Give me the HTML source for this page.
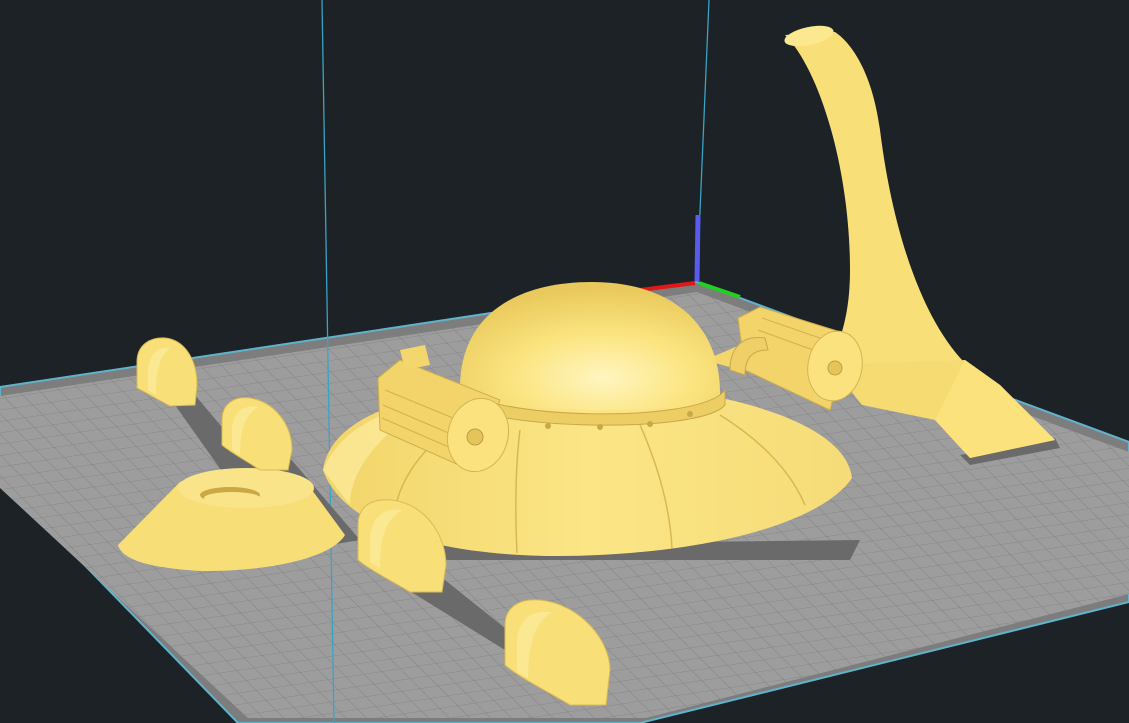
<!DOCTYPE html>
<html><head><meta charset="utf-8"><style>
html,body{margin:0;padding:0;background:#1c2226;}
svg{display:block}
</style></head><body>
<svg width="1129" height="723" viewBox="0 0 1129 723" xmlns="http://www.w3.org/2000/svg">
<defs>
<pattern id="g" width="18" height="18" patternUnits="userSpaceOnUse" patternTransform="matrix(1,-0.15,0.55,0.55,0,0)">
<rect width="18" height="18" fill="#9d9d9d"/>
<path d="M0 0H18M0 0V18" stroke="#828282" stroke-width="1.2" fill="none"/>
</pattern>
<radialGradient id="dome" cx="0.55" cy="0.75" r="0.7"><stop offset="0" stop-color="#fff6c0"/><stop offset="0.5" stop-color="#fbe47f"/><stop offset="1" stop-color="#e9c95c"/></radialGradient>
<linearGradient id="lo" x1="0" y1="0" x2="1" y2="0"><stop offset="0" stop-color="#f2d56a"/><stop offset="0.5" stop-color="#fbe585"/><stop offset="1" stop-color="#f6dc78"/></linearGradient>
</defs>
<rect width="1129" height="723" fill="#1c2226"/>
<polygon points="0,387 697,282 1129,442 1129,602 640,723 238,723 0,478" fill="#7d7d7d" stroke="#5fb3cc" stroke-width="2"/>
<polygon points="0,396 697,292 1129,452 1129,594 646,718 248,718 0,488" fill="url(#g)"/>
<line x1="322" y1="0" x2="334" y2="723" stroke="#3aa3c4" stroke-width="1.3"/>
<line x1="709" y1="0" x2="697" y2="282" stroke="#3aa3c4" stroke-width="1.3"/>
<line x1="698" y1="215" x2="697" y2="281" stroke="#5a5aee" stroke-width="5"/>
<line x1="640" y1="290" x2="695" y2="283" stroke="#e01818" stroke-width="4"/>
<line x1="699" y1="283" x2="740" y2="297" stroke="#22d022" stroke-width="4"/>
<g fill="#6a6a6a">
<polygon points="170,398 195,395 300,520 260,525"/>
<polygon points="255,462 290,458 360,540 330,545"/>
<polygon points="400,585 445,580 520,640 505,650"/>
<polygon points="430,545 860,540 850,560 440,560"/>
<polygon points="960,455 1055,438 1060,448 970,465"/>
</g>
<path d="M785,35 C820,70 850,170 850,270 C850,320 838,345 828,368 L968,366 C930,330 895,250 880,130 C872,70 850,42 835,32 Z" fill="#f8df78"/>
<ellipse cx="809" cy="36" rx="25" ry="9" transform="rotate(-12 809 36)" fill="#fbe88f"/>
<polygon points="830,365 965,360 1000,385 1055,440 970,458 935,420 862,405" fill="#f6da72"/>
<polygon points="935,420 965,360 1000,385 1055,440 970,458" fill="#fbe27c"/>
<path d="M705,360 L740,345 L760,350 L740,370Z" fill="#f3d66c"/>
<path d="M323,470 C330,420 400,388 560,380 C720,385 845,420 852,478 C820,525 700,555 560,556 C420,556 340,520 323,470Z" fill="url(#lo)"/>
<path d="M323,470 C340,430 380,410 440,398 C380,430 350,470 350,505Z" fill="#fff0a8" opacity="0.6"/>
<g stroke="#d8b850" stroke-width="1.5" fill="none">
<path d="M520,430 C515,470 515,510 517,553"/>
<path d="M640,425 C660,470 670,510 672,548"/>
<path d="M460,420 C420,450 400,480 395,510"/>
<path d="M720,415 C760,440 790,470 805,505"/>
</g>
<path d="M460,392 C458,320 510,282 592,282 C672,282 722,325 720,398 C690,415 500,415 460,392Z" fill="url(#dome)"/>
<path d="M455,385 C480,420 700,425 725,390 L725,405 C700,435 480,430 455,400Z" fill="#ecce64" stroke="#c9a84a" stroke-width="1"/>
<g fill="#c9a84a"><circle cx="548" cy="426" r="3"/><circle cx="600" cy="427" r="3"/><circle cx="650" cy="424" r="3"/><circle cx="690" cy="414" r="3"/></g>
<path d="M378,378 L400,360 L500,400 L470,470 L380,430Z" fill="#f2d46a" stroke="#cfae4c" stroke-width="1"/>
<g stroke="#d2b150" stroke-width="1"><line x1="385" y1="390" x2="470" y2="425"/><line x1="383" y1="405" x2="465" y2="440"/><line x1="382" y1="418" x2="460" y2="452"/></g>
<ellipse cx="478" cy="435" rx="30" ry="37" transform="rotate(15 478 435)" fill="#fbe27e" stroke="#d4b352"/>
<circle cx="475" cy="437" r="8" fill="#e5c45a" stroke="#bf9e44"/>
<path d="M400,350 L425,345 L430,365 L405,370Z" fill="#f3d66c"/>
<path d="M738,318 L760,307 L850,335 L830,410 L745,370Z" fill="#f2d46a" stroke="#cfae4c" stroke-width="1"/>
<g stroke="#d2b150" stroke-width="1"><line x1="762" y1="318" x2="840" y2="345"/><line x1="758" y1="330" x2="835" y2="358"/></g>
<ellipse cx="835" cy="366" rx="27" ry="35" transform="rotate(10 835 366)" fill="#fbe27e" stroke="#d4b352"/>
<circle cx="835" cy="368" r="7" fill="#e5c45a" stroke="#bf9e44"/>
<path d="M730,370 C730,345 745,335 765,338 L768,350 C752,350 745,358 745,375Z" fill="#efd068" stroke="#c9a84a"/>
<path d="M118,545 L180,482 C220,466 290,470 312,490 L345,535 C330,560 260,572 200,571 C150,568 122,560 118,545Z" fill="#f8de77"/>
<ellipse cx="246" cy="488" rx="68" ry="20" fill="#fae48a"/>
<ellipse cx="230" cy="495" rx="30" ry="8" fill="#caa846"/>
<ellipse cx="232" cy="498" rx="28" ry="6" fill="#fae48a"/>
<g fill="#f8df78" stroke="#d9b954" stroke-width="1">
<path d="M137,388 L137,362 C137,345 150,337 165,338 C185,340 197,360 197,385 L195,405 L170,406 C155,398 145,392 137,388Z"/>
<path d="M222,445 L222,420 C222,404 234,396 250,398 C275,402 292,425 292,450 L288,470 L260,470 C245,460 230,452 222,445Z"/>
<path d="M358,560 L358,525 C358,506 372,498 392,500 C425,504 446,535 446,565 L442,592 L410,592 C390,580 370,570 358,560Z"/>
<path d="M505,665 L505,625 C505,607 520,598 540,600 C580,604 610,640 610,670 L606,705 L570,705 C545,690 520,678 505,665Z"/>
</g>
<g fill="#fbe893">
<path d="M148,370 C150,352 160,346 170,348 C160,356 156,370 156,395 L148,390Z"/>
<path d="M232,428 C234,410 245,405 258,407 C245,415 240,430 240,455 L232,450Z"/>
<path d="M370,538 C372,515 385,508 402,510 C385,520 380,540 380,568 L370,562Z"/>
<path d="M517,640 C519,618 532,610 552,612 C535,622 528,645 528,678 L517,672Z"/>
</g>
</svg>
</body></html>
